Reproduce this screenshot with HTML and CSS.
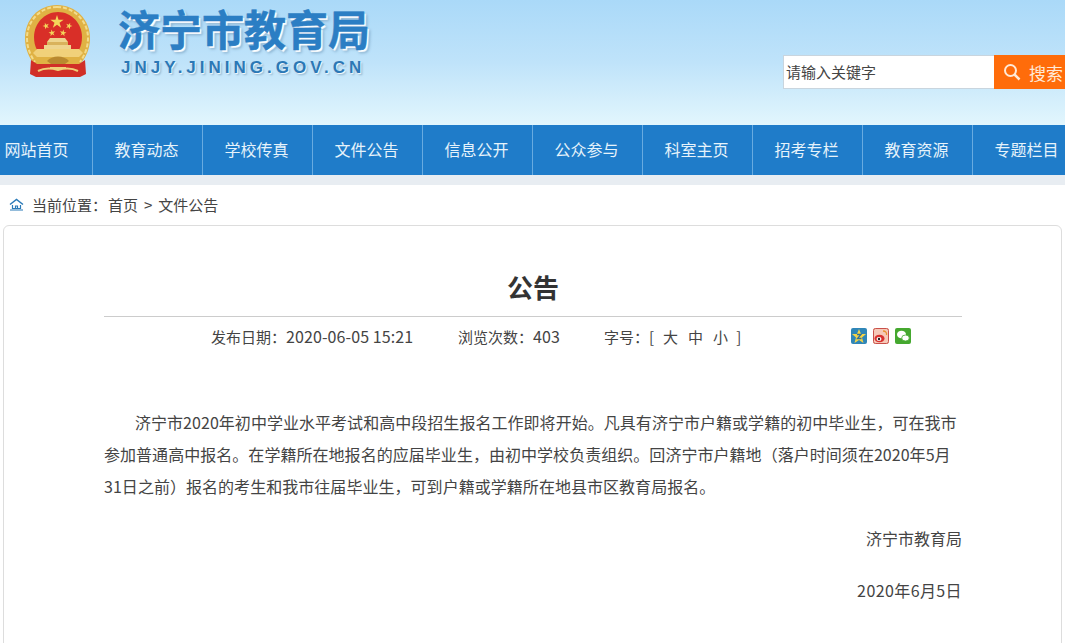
FILE: index.html
```html
<!DOCTYPE html>
<html lang="zh-CN">
  <head>
    <meta charset="UTF-8" />
    <title>公告 - 济宁市教育局</title>
    <link rel="stylesheet" href="styles.css">
  </head>
  <body>
    <div class="header">
      <div class="logo">
        <svg class="emblem" width="70" height="80" viewBox="22 2 70 80">
          <defs>
            <polygon id="star" points="0,-1 .22,-.31 .95,-.31 .36,.12 .59,.81 0,.38 -.59,.81 -.36,.12 -.95,-.31 -.22,-.31" fill="#f4d65a"/>
          </defs>
          <path d="M57 5C38 5 25 20 25 38c0 11 4 20 10 27h44c7-7 11-16 11-27C90 20 76 5 57 5z" fill="#e0b244"/>
          <path d="M57 7C40 7 27 21 27 38c0 9 3 17 8 24M57 7c17 0 31 14 31 31 0 9-3 17-8 24" fill="none" stroke="#f3dc8c" stroke-width="2" stroke-dasharray="4 2"/>
          <path d="M58 12C45 12 34 23 34 37c0 5 1 9 3 13h42c2-4 3-8 3-13C82 23 71 12 58 12z" fill="#d92f28"/>
          <use href="#star" transform="translate(57 22) scale(7)"/>
          <use href="#star" transform="translate(46 26) rotate(-20) scale(3.500)"/>
          <use href="#star" transform="translate(69 26) rotate(20) scale(3.500)"/>
          <use href="#star" transform="translate(52 33) rotate(-10) scale(3.500)"/>
          <use href="#star" transform="translate(63 33) rotate(10) scale(3.500)"/>
          <path d="M50 38h15l3 4H47z" fill="#eed48e"/>
          <rect x="47" y="42" width="21" height="3" fill="#d9b25c"/>
          <rect x="44" y="45" width="27" height="5" fill="#eed48e"/>
          <path d="M37 49h42l4 4-4 4H37l-4-4z" fill="#f1d17a"/>
          <path d="M47 61c5-6 17-6 22 0l-4 3H51z" fill="#b9892f"/>
          <path d="M31 60l6 4h42l6-4 1 14-6 3H36l-6-3z" fill="#d12f27"/>
          <path d="M38 71c6-3 13-3 20-1 7-2 14-2 20 1" fill="none" stroke="#efcf78" stroke-width="2"/>
          <path d="M50 68h16" stroke="#efcf78" stroke-width="2"/>
        </svg>
        <div class="site-name">
          <div class="site-title">济宁市教育局</div>
          <div class="site-url">JNJY.JINING.GOV.CN</div>
        </div>
      </div>
      <div class="search">
        <div class="search-input">请输入关键字</div>
        <div class="search-btn">
          <svg width="18" height="18" viewBox="0 0 18 18">
            <circle cx="7.500" cy="7.500" r="5.500" fill="none" stroke="#ffe9d6" stroke-width="2"/>
            <path d="M11.500 11.500L16.500 16.500" stroke="#ffe9d6" stroke-width="2.500"/>
          </svg>
          <span>搜索</span>
        </div>
      </div>
    </div>

    <div class="nav">
      <a>网站首页</a>
      <a>教育动态</a>
      <a>学校传真</a>
      <a>文件公告</a>
      <a>信息公开</a>
      <a>公众参与</a>
      <a>科室主页</a>
      <a>招考专栏</a>
      <a>教育资源</a>
      <a>专题栏目</a>
    </div>

    <div class="crumb">
      <svg width="15" height="13" viewBox="0 0 15 13">
        <path d="M1 6.500L7.500 1.500L14 6.500" fill="none" stroke="#2a7ab8" stroke-width="1.500"/>
        <path d="M3.500 7v3.500h8V7M6.500 10.500V8h2v2.500M1 12h13" fill="none" stroke="#2a7ab8" stroke-width="1.200"/>
      </svg>
      <span>当前位置：</span><span class="crumb-link">首页</span><span class="crumb-sep">&gt;</span><span>文件公告</span>
    </div>

    <div class="card">
      <h1>公告</h1>
      <div class="meta">
        <span class="meta-date">发布日期：<span class="num">2020-06-05 15:21</span></span>
        <span class="meta-views">浏览次数：<span class="num">403</span></span>
        <span class="meta-size">字号：[<i>大</i><i>中</i><i>小</i>]</span>
        <span class="share">
          <svg width="16" height="16" viewBox="0 0 16 16">
            <rect width="16" height="16" rx="2" fill="#2f86b8"/>
            <polygon points="8,1 10,6 15,6 11,9.500 12.500,15 8,12 3.500,15 5,9.500 1,6 6,6" fill="#f5d447"/>
            <path d="M6 6.500h4L6.500 10.500h4" fill="none" stroke="#2f6f9a" stroke-width="1.300"/>
          </svg>
          <svg width="16" height="16" viewBox="0 0 16 16">
            <rect width="16" height="16" rx="2" fill="#f6c9b8"/>
            <rect x=".5" y=".5" width="15" height="15" rx="2" fill="none" stroke="#c9504a"/>
            <ellipse cx="6.500" cy="10.500" rx="5" ry="3.800" fill="#d8322f"/>
            <ellipse cx="6" cy="11" rx="2.500" ry="2" fill="#fff"/>
            <circle cx="6" cy="11" r="1.200" fill="#222"/>
            <path d="M10 3c2.500 0 4 1.500 3.500 4" fill="none" stroke="#e8912f" stroke-width="1.300"/>
          </svg>
          <svg width="16" height="16" viewBox="0 0 16 16">
            <rect width="16" height="16" rx="2" fill="#45a82f"/>
            <ellipse cx="6.500" cy="6.500" rx="4.500" ry="3.800" fill="#fff"/>
            <ellipse cx="10.500" cy="10" rx="3.800" ry="3" fill="#fff" stroke="#45a82f" stroke-width=".8"/>
          </svg>
        </span>
      </div>
      <div class="article">
        <p class="lead">济宁市2020年初中学业水平考试和高中段招生报名工作即将开始。凡具有济宁市户籍或学籍的初中毕业生，可在我市参加普通高中报名。在学籍所在地报名的应届毕业生，由初中学校负责组织。回济宁市户籍地（落户时间须在2020年5月31日之前）报名的考生和我市往届毕业生，可到户籍或学籍所在地县市区教育局报名。</p>
        <p class="sign">济宁市教育局</p>
        <p class="sign sign-date">2020年6月5日</p>
      </div>
    </div>
  </body>
</html>
```

FILE: styles.css
```css
html, body {
  margin: 0;
  padding: 0;
  height: 643px;
  overflow: hidden;
}
body {
  font-family: "Noto Sans CJK SC", "Liberation Sans", sans-serif;
  background-color: #fff;
  color: #333;
}
.header {
  height: 125px;
  background: linear-gradient(#aad9f8, #bfe3fa 50%, #e2f6fd);
  display: flex;
  justify-content: space-between;
}
.logo {
  display: flex;
  padding: 2px 0 0 22px;
}
.site-name {
  margin-left: 26px;
  padding-top: 1px;
}
.site-title {
  font-size: 42px;
  font-weight: 700;
  line-height: 50px;
  color: #2b7ec4;
  -webkit-text-stroke: 0.5px #2b7ec4;
  text-shadow: 2px 2px 1px #fff, 3px 3px 3px #7fa9c9;
}
.site-url {
  font-family: "Liberation Sans", sans-serif;
  font-size: 17px;
  font-weight: 700;
  letter-spacing: 4px;
  line-height: 22px;
  margin: 4px 0 0 3px;
  color: #2b78b6;
  text-shadow: 1px 1px 1px #fff, 2px 2px 2px #8fb3cc;
}
.search {
  display: flex;
  margin-top: 55px;
  height: 34px;
}
.search-input {
  width: 208px;
  height: 32px;
  line-height: 31px;
  padding-left: 2px;
  background-color: #fff;
  border: 1px solid #c9d5de;
  border-right: none;
  font-size: 15px;
  color: #444;
}
.search-btn {
  width: 71px;
  background-color: #ff6c0a;
  color: #ffe9d6;
  font-size: 17px;
  display: flex;
  align-items: center;
  padding-left: 9px;
  box-sizing: border-box;
  gap: 8px;
  white-space: nowrap;
}
.nav {
  display: flex;
  height: 50px;
  margin-left: -17px;
  background-color: #1f7cc9;
}
.nav a {
  flex: 0 0 110px;
  box-sizing: border-box;
  padding-right: 2px;
  text-align: center;
  line-height: 49px;
  font-size: 16px;
  color: #e6f3fb;
  border-right: 1px solid #68abe0;
}
.crumb {
  height: 50px;
  box-sizing: border-box;
  border-top: 10px solid #e8edf2;
  padding: 0 0 2px 9px;
  display: flex;
  align-items: center;
  font-size: 15px;
  color: #444;
}
.crumb svg {
  margin-right: 8px;
}
.crumb-link {
  margin-left: 1px;
}
.crumb-sep {
  margin: 0 6px;
}
.card {
  margin: 0 3px;
  padding: 0 99px 0 100px;
  height: 430px;
  border: 1px solid #ddd;
  border-radius: 6px;
}
h1 {
  margin: 0;
  padding-top: 39px;
  height: 51px;
  line-height: 44px;
  text-align: center;
  font-size: 26px;
  font-weight: 700;
  color: #333;
  border-bottom: 1px solid #ccc;
}
.meta {
  display: flex;
  height: 38px;
  align-items: center;
  font-size: 15px;
  color: #444;
  padding-left: 107px;
  white-space: nowrap;
}
.num {
  font-size: 16px;
  letter-spacing: 0.1px;
}
.meta-date {
  width: 247px;
}
.meta-views {
  width: 146px;
}
.meta-size {
  width: 247px;
}
.meta-size i {
  font-style: normal;
  margin-left: 10px;
}
.meta-size i:first-child {
  margin-left: 9px;
}
.meta-size i:last-child {
  margin-right: 8px;
}
.share {
  display: flex;
  gap: 6px;
}
.article {
  font-size: 16px;
  line-height: 32px;
  color: #444;
  padding-top: 51px;
}
.article p {
  margin: 0;
}
.lead {
  text-indent: 31px;
  letter-spacing: 0.04px;
}
.sign {
  text-align: right;
  margin-top: 20px !important;
}
.sign-date {
  letter-spacing: 0.4px;
}
```
